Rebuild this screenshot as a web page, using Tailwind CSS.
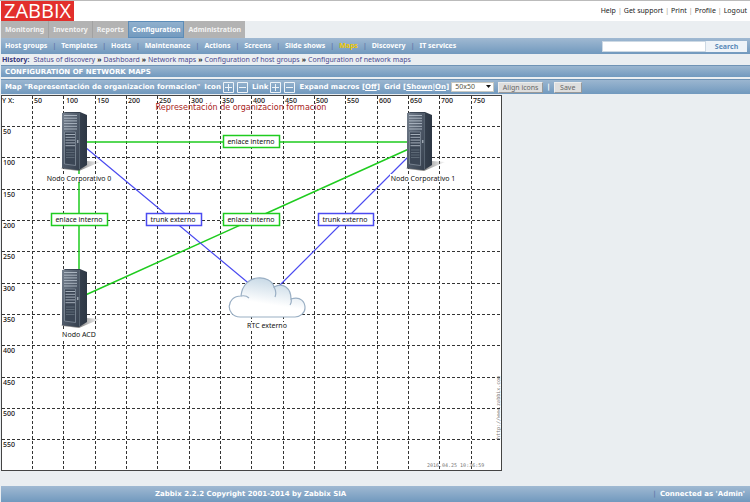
<!DOCTYPE html>
<html lang="en">
<head>
    <meta charset="UTF-8">
    <meta name="viewport" content="width=device-width, initial-scale=1.0">
    <title>Configuration of network maps</title>
    <script src="https://cdn.jsdelivr.net/npm/@tailwindcss/browser@4"></script>
</head>
<body class="min-h-screen flex flex-col bg-[#eaeef1] border-t border-[#bbb] font-['Noto_Sans',sans-serif] text-[7px] leading-[10px] text-[#222]">
    <!-- header -->
    <header class="flex items-center justify-between bg-white pl-px pr-[3px] h-5">
        <a href="#" class="block w-[73px] h-5 bg-[#e22f2c] text-center font-['Open_Sans',sans-serif] text-[20px] leading-[20px] text-white">ZABBIX</a>
        <nav class="flex gap-0.5">
            <a href="#">Help</a><span class="text-[#a98]">|</span>
            <a href="#">Get support</a><span class="text-[#a98]">|</span>
            <a href="#">Print</a><span class="text-[#a98]">|</span>
            <a href="#">Profile</a><span class="text-[#a98]">|</span>
            <a href="#">Logout</a>
        </nav>
    </header>

    <!-- main menu -->
    <nav class="flex h-[17px] pl-px font-bold leading-[17px] text-[#f2f2f2]">
        <a href="#" class="px-1 bg-[#b3b3b3] border-r border-[#a2a2a2]">Monitoring</a>
        <a href="#" class="px-1 bg-[#b3b3b3] border-r border-[#a2a2a2]">Inventory</a>
        <a href="#" class="px-1 bg-[#b3b3b3]">Reports</a>
        <a href="#" class="px-1 bg-linear-to-b from-[#92b1ce] to-[#7199be] ring-1 ring-inset ring-[#5c8cb8] text-white">Configuration</a>
        <a href="#" class="px-1 bg-[#b3b3b3]">Administration</a>
    </nav>

    <!-- sub menu -->
    <div class="flex items-center justify-between h-4 ml-px pl-1 pr-[3px] bg-linear-to-b from-[#a0b9d2] to-[#7199be] font-bold">
        <nav class="flex gap-[5px] text-white">
            <a href="#">Host groups</a><span class="text-[#667aaa]">|</span>
            <a href="#">Templates</a><span class="text-[#667aaa]">|</span>
            <a href="#">Hosts</a><span class="text-[#667aaa]">|</span>
            <a href="#">Maintenance</a><span class="text-[#667aaa]">|</span>
            <a href="#">Actions</a><span class="text-[#667aaa]">|</span>
            <a href="#">Screens</a><span class="text-[#667aaa]">|</span>
            <a href="#">Slide shows</a><span class="text-[#667aaa]">|</span>
            <a href="#" class="text-[#f0c800]">Maps</a><span class="text-[#667aaa]">|</span>
            <a href="#">Discovery</a><span class="text-[#667aaa]">|</span>
            <a href="#">IT services</a>
        </nav>
        <form class="flex pt-px">
            <input type="text" aria-label="Search text" class="w-[104px] h-[11px] bg-white border border-[#cdd9e4]">
            <button type="button" class="w-[41px] h-[11px] bg-[#eef3f8] text-[#5b8ab8]">Search</button>
        </form>
    </div>

    <!-- history -->
    <nav class="flex gap-0.5 h-[11px] pl-0.5 leading-[11px] text-[#4a4a90]">
        <b class="mr-0.5 text-[#33337a]">History:</b>
        <a href="#">Status of discovery</a><b class="text-[#222]">»</b>
        <a href="#">Dashboard</a><b class="text-[#222]">»</b>
        <a href="#">Network maps</a><b class="text-[#222]">»</b>
        <a href="#">Configuration of host groups</a><b class="text-[#222]">»</b>
        <a href="#">Configuration of network maps</a>
    </nav>

    <h1 class="ml-px h-3 pl-1 border-t border-[#6f93b5] bg-linear-to-b from-[#9bb6d0] to-[#7199be] font-['DejaVu_Sans',sans-serif] font-bold leading-[12px] text-white">CONFIGURATION OF NETWORK MAPS</h1>

    <!-- map toolbar -->
    <div class="flex items-center mt-0.5 ml-px h-[15px] pl-1 border-t border-[#6f93b5] bg-linear-to-b from-[#9bb6d0] to-[#7199be] font-['DejaVu_Sans',sans-serif] font-bold whitespace-nowrap text-white">
        <span>Map "Representación de organizacion formacion"</span>
        <span class="ml-1 mr-0.5">Icon</span>
        <button type="button" aria-label="Add icon" class="mr-[3px]"><svg class="w-[11px] h-[11px]" viewBox="0 0 11 11" fill="none" stroke="#eef3f8"><path d="M.5 .5h10v10h-10zM2 5.500h7M5.500 2v7"/></svg></button>
        <button type="button" aria-label="Remove icon"><svg class="w-[11px] h-[11px]" viewBox="0 0 11 11" fill="none" stroke="#eef3f8"><path d="M.5 .5h10v10h-10zM2 5.500h7"/></svg></button>
        <span class="ml-1 mr-0.5">Link</span>
        <button type="button" aria-label="Add link" class="mr-[3px]"><svg class="w-[11px] h-[11px]" viewBox="0 0 11 11" fill="none" stroke="#eef3f8"><path d="M.5 .5h10v10h-10zM2 5.500h7M5.500 2v7"/></svg></button>
        <button type="button" aria-label="Remove link"><svg class="w-[11px] h-[11px]" viewBox="0 0 11 11" fill="none" stroke="#eef3f8"><path d="M.5 .5h10v10h-10zM2 5.500h7"/></svg></button>
        <span class="ml-1">Expand macros [<a href="#" class="underline">Off</a>]</span>
        <span class="ml-1 mr-0.5">Grid [<a href="#" class="underline">Shown</a>|<a href="#" class="underline">On</a>]</span>
        <span class="relative flex font-['Noto_Sans',sans-serif]">
            <select aria-label="Grid size" class="appearance-none w-[43px] h-[10px] pl-[3px] bg-white border border-[#c8c8c0] font-normal leading-[8px] text-[#554]">
                <option>50x50</option>
            </select>
            <svg class="absolute right-[3px] top-[3px] w-[5px] h-[3px] pointer-events-none" viewBox="0 0 5 3"><path d="M0 0h5L2.500 3z" fill="#111"/></svg>
        </span>
        <button type="button" class="ml-1 w-[45px] h-[11px] bg-[#dedede] border border-[#999] border-t-[#eee] border-l-[#eee] font-['Noto_Sans',sans-serif] font-normal leading-[9px] text-[#666]">Align icons</button>
        <span class="mx-1">|</span>
        <button type="button" class="w-[28px] h-[11px] bg-[#dedede] border border-[#999] border-t-[#eee] border-l-[#eee] font-['Noto_Sans',sans-serif] font-normal leading-[9px] text-[#666]">Save</button>
    </div>

    <!-- network map -->
    <main class="pl-px pt-px">
        <svg class="block w-[501px] h-[376px]" viewBox="0 0 501 376" font-family="Noto Sans, sans-serif" font-size="7" fill="#111">
            <defs>
                <linearGradient id="front" x1="0" y1="0" x2="1" y2="1"><stop offset="0" stop-color="#75808e"/><stop offset=".5" stop-color="#4f5a69"/><stop offset="1" stop-color="#36404e"/></linearGradient>
                <linearGradient id="side" x1="0" y1="0" x2="1" y2="0"><stop offset="0" stop-color="#465160"/><stop offset="1" stop-color="#2d3744"/></linearGradient>
                <linearGradient id="shade" x1="0" y1="0" x2="1" y2="0"><stop offset=".5" stop-color="#555" stop-opacity=".7"/><stop offset="1" stop-color="#999" stop-opacity=".1"/></linearGradient>
                <linearGradient id="lobe" x1=".8" y1="0" x2=".5" y2="1"><stop offset="0" stop-color="#bfd3e2"/><stop offset=".7" stop-color="#fff"/></linearGradient>
                <symbol id="server" viewBox="0 0 40 60">
                    <path d="M0 57L26 50L39 51L32 54L18 60L2 58z" fill="url(#shade)"/>
                    <path d="M2 2L4 1H19L26 4V54L18 59L1 57z" fill="url(#side)"/>
                    <path d="M1 2L18 2V59L1 57z" fill="url(#front)"/>
                    <path d="M18.500 2V58" stroke="#66727f" stroke-width=".7"/>
                    <path d="M3 4.500H16M3 7.200H16M3 9.900H16M3 12.600H16M3 15.300H16M3 18H16" stroke="#b4bec9" stroke-width=".9"/>
                    <path d="M3.500 21H14.500V54.500L3.500 53z" fill="#3b4655" stroke="#8b96a3" stroke-width=".7"/>
                    <path d="M4.500 23.500H14M4.500 26.300H14M4.500 29.100H14M4.500 31.900H14M4.500 34.700H14" stroke="#b0bac5" stroke-width=".9"/>
                    <path d="M5 39H13.500M5 41.500H13.500M5 44H13.500M5 46.500H13.500" stroke="#66727f" stroke-width=".8"/>
                    <path d="M16.800 29V32" stroke="#c4ccd5"/>
                </symbol>
            </defs>

            <rect x=".5" y=".5" width="500" height="375" fill="#fff" stroke="#444"/>
            <path d="M31.500 1V375M62.500 1V375M94.500 1V375M125.500 1V375M156.500 1V375M188.500 1V375M219.500 1V375M250.500 1V375M282.500 1V375M313.500 1V375M344.500 1V375M376.500 1V375M407.500 1V375M438.500 1V375M470.500 1V375
                M1 31.500H500M1 62.500H500M1 94.500H500M1 125.500H500M1 156.500H500M1 188.500H500M1 219.500H500M1 250.500H500M1 282.500H500M1 313.500H500M1 344.500H500" stroke="#333" stroke-dasharray="3 2" fill="none"/>

            <!-- axis numbers -->
            <g font-weight="500">
                <text x="1" y="8">Y X:</text>
                <text x="33" y="8">50</text><text x="65" y="8">100</text><text x="96" y="8">150</text><text x="127" y="8">200</text><text x="158" y="8">250</text>
                <text x="190" y="8">300</text><text x="221" y="8">350</text><text x="252" y="8">400</text><text x="284" y="8">450</text><text x="315" y="8">500</text>
                <text x="346" y="8">550</text><text x="378" y="8">600</text><text x="409" y="8">650</text><text x="440" y="8">700</text><text x="472" y="8">750</text>
                <text x="2" y="39">50</text><text x="2" y="70">100</text><text x="2" y="102">150</text><text x="2" y="133">200</text><text x="2" y="164">250</text>
                <text x="2" y="196">300</text><text x="2" y="227">350</text><text x="2" y="258">400</text><text x="2" y="290">450</text><text x="2" y="321">500</text><text x="2" y="352">550</text>
            </g>
            <text x="240" y="15" font-family="DejaVu Sans, sans-serif" font-size="8" fill="#a81c1c" text-anchor="middle">Representación de organizacion formacion</text>

            <!-- links -->
            <path d="M80 47H410M78 70V180M80 202L410 53" stroke="#1fcc1f" stroke-width="1.500" fill="none"/>
            <path d="M84 52L251 191M408 61L277 192" stroke="#4b4bf0" stroke-width="1.200" fill="none"/>

            <!-- link labels -->
            <g fill="#fff" stroke-width="1.500">
                <g stroke="#1fcc1f">
                    <rect x="222.500" y="40.500" width="56" height="12"/>
                    <rect x="50.500" y="118.500" width="56" height="12"/>
                    <rect x="222.500" y="118.500" width="56" height="12"/>
                </g>
                <g stroke="#4b4bf0">
                    <rect x="145.500" y="118.500" width="55" height="12"/>
                    <rect x="317.500" y="118.500" width="55" height="12"/>
                </g>
            </g>
            <g text-anchor="middle">
                <text x="250" y="49">enlace interno</text>
                <text x="78" y="127">enlace interno</text>
                <text x="250" y="127">enlace interno</text>
                <text x="172" y="127">trunk externo</text>
                <text x="344" y="127">trunk externo</text>
            </g>

            <!-- nodes -->
            <use href="#server" x="60" y="16" width="40" height="60"/>
            <use href="#server" x="405" y="16" width="40" height="60"/>
            <use href="#server" x="60" y="173" width="40" height="60"/>
            <g stroke="#9aafc4" stroke-width="1.200">
                <path d="M239 222C224 221 225 201 240 201C242 178 270 179 273 192C282 187 290 193 290 204C300 201 304 207 304 213C304 218 299 222 294 222z" fill="url(#lobe)"/>
                <path d="M240 201Q245 200 248 203M273 192Q276 197 274 202M290 204Q291 207 289 210" fill="none"/>
            </g>
            <g fill="#fff">
                <rect x="45" y="79" width="66" height="8"/>
                <rect x="389" y="79" width="66" height="8"/>
                <rect x="61" y="236" width="34" height="8"/>
                <rect x="245" y="227" width="42" height="8"/>
            </g>
            <g text-anchor="middle">
                <text x="78" y="86">Nodo Corporativo 0</text>
                <text x="422" y="86">Nodo Corporativo 1</text>
                <text x="78" y="242">Nodo ACD</text>
                <text x="266" y="233">RTC externo</text>
            </g>
            <g font-family="DejaVu Sans Mono, monospace" fill="#777">
                <text x="426" y="372" font-size="5">2016.04.25 10:36:59</text>
                <text font-size="5" transform="translate(499 344) rotate(-90)">http://www.zabbix.com</text>
            </g>
        </svg>
    </main>

    <!-- footer -->
    <footer class="grid grid-cols-[1fr_auto] items-center mt-auto ml-px h-4 pr-[5px] bg-linear-to-b from-[#a0b9d2] to-[#7199be] font-['DejaVu_Sans',sans-serif] font-bold text-white">
        <span class="pl-[154px]">Zabbix 2.2.2 Copyright 2001-2014 by Zabbix SIA</span>
        <span class="flex gap-1"><span class="text-[#667aaa]">|</span>Connected as 'Admin'</span>
    </footer>
</body>
</html>
